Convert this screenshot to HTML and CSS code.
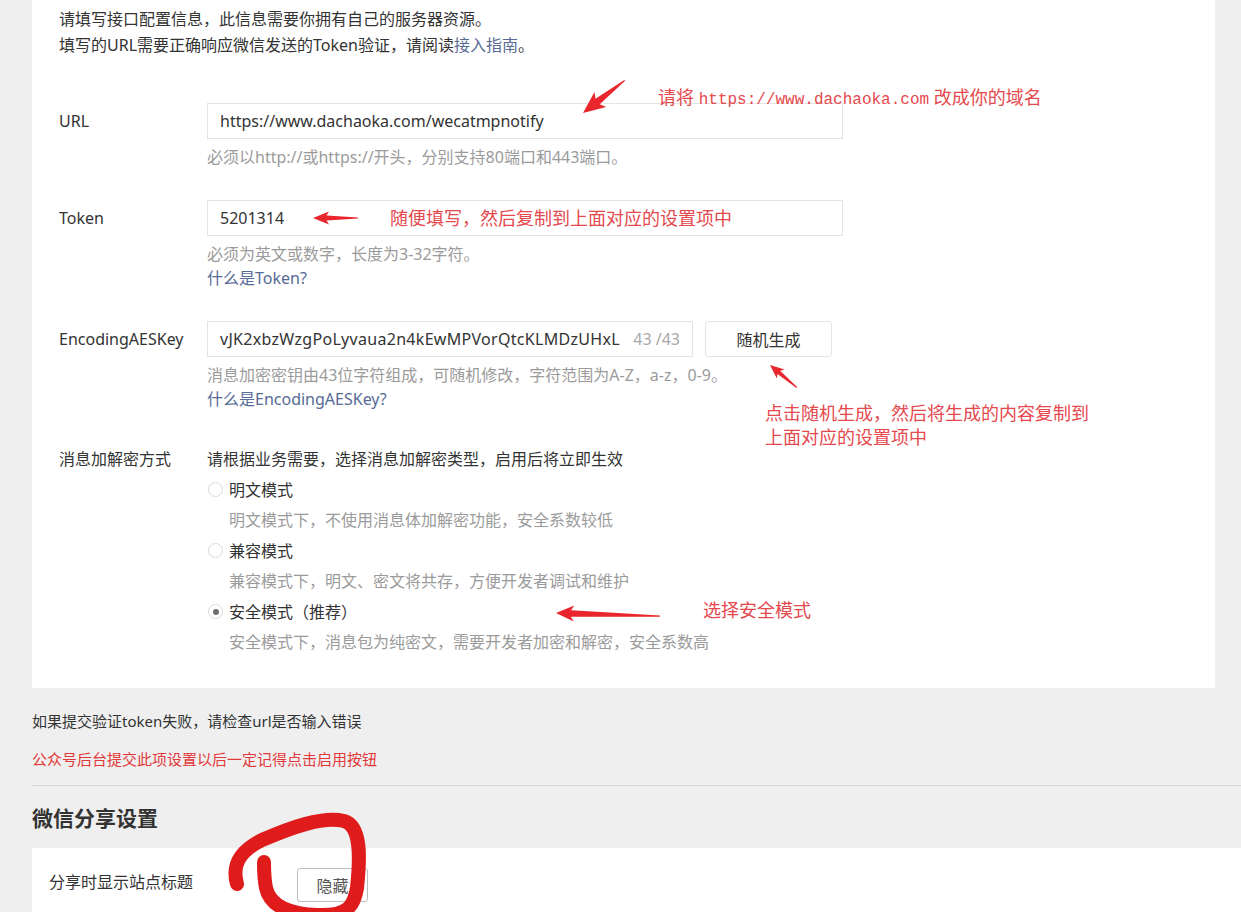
FILE: index.html
```html
<!DOCTYPE html>
<html lang="zh-CN">
<head>
    <meta charset="UTF-8">
    <meta name="viewport" content="width=device-width, initial-scale=1.0">
    <title>服务器配置</title>
    <link rel="stylesheet" href="styles.css">
</head>
<body>
    <div class="page">
        <div class="panel">
            <p class="intro">
                请填写接口配置信息，此信息需要你拥有自己的服务器资源。<br>
                填写的URL需要正确响应微信发送的Token验证，请阅读<a class="link" href="#">接入指南</a>。
            </p>

            <div class="row row-url">
                <div class="label">URL</div>
                <div class="field">
                    <div class="input">https://www.dachaoka.com/wecatmpnotify</div>
                    <p class="tip">必须以http://或https://开头，分别支持80端口和443端口。</p>
                </div>
            </div>

            <div class="row">
                <div class="label">Token</div>
                <div class="field">
                    <div class="input">5201314</div>
                    <p class="tip">必须为英文或数字，长度为3-32字符。</p>
                    <a class="link" href="#">什么是Token?</a>
                </div>
            </div>

            <div class="row">
                <div class="label">EncodingAESKey</div>
                <div class="field">
                    <div class="key-line">
                        <div class="input input-key">
                            <span class="key-value">vJK2xbzWzgPoLyvaua2n4kEwMPVorQtcKLMDzUHxL</span>
                            <span class="counter">43 /43</span>
                        </div>
                        <button type="button" class="btn">随机生成</button>
                    </div>
                    <p class="tip">消息加密密钥由43位字符组成，可随机修改，字符范围为A-Z，a-z，0-9。</p>
                    <a class="link" href="#">什么是EncodingAESKey?</a>
                </div>
            </div>

            <div class="row row-mode">
                <div class="label label-text">消息加解密方式</div>
                <div class="field">
                    <p class="mode-head">请根据业务需要，选择消息加解密类型，启用后将立即生效</p>
                    <div class="radio"><span class="dot"></span>明文模式</div>
                    <p class="mode-desc">明文模式下，不使用消息体加解密功能，安全系数较低</p>
                    <div class="radio"><span class="dot"></span>兼容模式</div>
                    <p class="mode-desc">兼容模式下，明文、密文将共存，方便开发者调试和维护</p>
                    <div class="radio"><span class="dot checked"></span>安全模式（推荐）</div>
                    <p class="mode-desc">安全模式下，消息包为纯密文，需要开发者加密和解密，安全系数高</p>
                </div>
            </div>
        </div>

        <p class="note">如果提交验证token失败，请检查url是否输入错误</p>
        <p class="note note-red">公众号后台提交此项设置以后一定记得点击启用按钮</p>

        <hr class="divider">

        <h2 class="section-title">微信分享设置</h2>

        <div class="card">
            <div class="card-label">分享时显示站点标题</div>
            <button type="button" class="btn btn-small">隐藏</button>
        </div>
    </div>

    <!-- red marks drawn over the screenshot -->
    <svg class="marks" width="1241" height="912" viewBox="0 0 1241 912">
        <g fill="#e8262b">
            <polygon transform="translate(583 113) rotate(-38)" points="0,0 22,-9.5 18.5,-3.5 53,-0.6 53,0.6 18.5,3.5 22,9.5"/>
            <polygon transform="translate(313 218)" points="0,0 16,-6.5 13.5,-2.6 45,-0.6 45,0.6 13.5,2.6 16,6.5"/>
            <polygon transform="translate(770 365) rotate(40)" points="0,0 14,-6 11.5,-2 35,-0.5 35,0.5 11.5,2 14,6"/>
            <polygon transform="translate(556 613) rotate(1.7)" points="0,0 18,-8 15,-3.2 104,-0.6 104,0.6 15,3.2 18,8"/>
        </g>
        <path d="M237 884 C232 866 238 852 262 840 C290 828 322 816 344 821 C362 826 360 860 357 888 C354 906 348 916 318 915 C288 914 270 906 266 888 C264 878 264 868 264 862"
              fill="none" stroke="#e01b1b" stroke-width="14" stroke-linecap="round" stroke-linejoin="round"/>
    </svg>

    <span class="anno anno-url">请将 <span class="mono">https://www.dachaoka.com</span> 改成你的域名</span>
    <span class="anno anno-token">随便填写，然后复制到上面对应的设置项中</span>
    <span class="anno anno-key">点击随机生成，然后将生成的内容复制到<br>上面对应的设置项中</span>
    <span class="anno anno-mode">选择安全模式</span>
</body>
</html>
```

FILE: styles.css
```css
body {
    margin: 0;
    height: 912px;
    overflow: hidden;
    position: relative;
    background-color: #efefef;
    font-family: "Noto Sans", "Noto Sans CJK SC", sans-serif;
    font-size: 16px;
    color: #333;
}

p {
    margin: 0;
}

.page {
    padding-left: 32px;
    width: 1209px;
}

.panel {
    width: 1183px;
    box-sizing: border-box;
    background-color: #fff;
    padding: 6px 27px 30px;
}

.intro {
    line-height: 26px;
}

.link {
    color: #576b95;
    text-decoration: none;
    line-height: 24px;
}

.row {
    display: flex;
    margin-top: 31px;
}

.row-url {
    margin-top: 45px;
}

.label {
    width: 148px;
    flex-shrink: 0;
    line-height: 36px;
}

.field {
    display: flex;
    flex-direction: column;
    align-items: flex-start;
}

.input {
    width: 636px;
    height: 36px;
    box-sizing: border-box;
    border: 1px solid #e4e4e4;
    padding: 0 12px;
    line-height: 34px;
    white-space: nowrap;
    overflow: hidden;
}

.tip {
    margin-top: 6px;
    line-height: 24px;
    color: #9b9b9b;
}

.key-line {
    display: flex;
    gap: 12px;
}

.input-key {
    width: 486px;
    display: flex;
    justify-content: space-between;
}

.key-value {
    overflow: hidden;
    letter-spacing: 0.3px;
}

.counter {
    color: #a8a8a8;
    padding-left: 6px;
    flex-shrink: 0;
}

.btn {
    height: 36px;
    width: 127px;
    background-color: #fff;
    border: 1px solid #e4e4e4;
    border-radius: 3px;
    font-family: inherit;
    font-size: 16px;
    color: #333;
    padding: 0;
}

.row-mode {
    margin-top: 33px;
}

.label-text,
.mode-head,
.radio,
.mode-desc {
    line-height: 30.5px;
}

.radio {
    display: flex;
    align-items: center;
}

.dot {
    width: 15px;
    height: 15px;
    box-sizing: border-box;
    border: 1px solid #dadada;
    border-radius: 50%;
    margin: 0 6px 0 1px;
    position: relative;
}

.dot.checked::after {
    content: "";
    position: absolute;
    left: 3.5px;
    top: 3.5px;
    width: 6px;
    height: 6px;
    border-radius: 50%;
    background-color: #6f6f6f;
}

.mode-desc {
    color: #9b9b9b;
    padding-left: 22px;
}

.note {
    font-size: 15px;
    line-height: 24px;
    margin-top: 21px;
}

.note-red {
    color: #e2383a;
    margin-top: 14px;
}

.divider {
    border: none;
    border-top: 1px solid #d8d8d8;
    margin: 14px 0 0;
}

.section-title {
    margin: 17px 0 0;
    font-size: 21px;
    line-height: 30px;
    font-weight: bold;
    color: #333;
}

.card {
    margin-top: 15px;
    background-color: #fff;
    display: flex;
    align-items: flex-start;
    padding: 20px 17px 20px;
    height: 80px;
    box-sizing: border-box;
}

.card-label {
    width: 248px;
    line-height: 28px;
}

.btn-small {
    width: 71px;
    height: 34px;
    border-color: #bdbdbd;
    color: #555;
}

.marks {
    position: absolute;
    left: 0;
    top: 0;
    pointer-events: none;
}

.anno {
    position: absolute;
    font-size: 18px;
    line-height: 24px;
    color: #e5484d;
    white-space: nowrap;
}

.mono {
    font-family: "Liberation Mono", monospace;
    font-size: 16px;
}

.anno-url {
    left: 658px;
    top: 85px;
}

.anno-token {
    left: 390px;
    top: 206px;
}

.anno-key {
    left: 765px;
    top: 401px;
}

.anno-mode {
    left: 703px;
    top: 598px;
}
```
